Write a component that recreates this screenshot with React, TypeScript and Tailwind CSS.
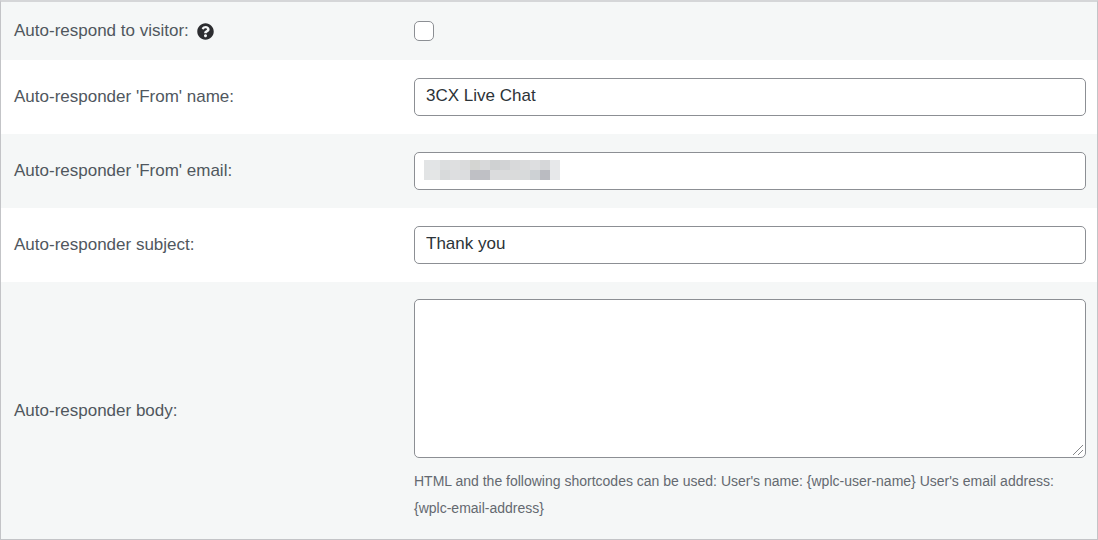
import type { ReactNode } from 'react';

const inputClass =
  'block h-[38px] w-full rounded-[5px] border border-[#8c8f94] bg-white px-[11px] pb-0.5 text-[17px] text-[#2c3338] outline-none focus:border-[#2271b1]';

// Blocks that hide the sender address, two rows of tiles
const maskTiles = [
  ['bg-[#e2e4e5]', 'bg-[#e2e4e6]', 'bg-[#dcdedf]', 'bg-[#dedfe0]', 'bg-[#dadbdc]', 'bg-[#d4d5d2]', 'bg-[#d8d9da]', 'bg-[#cfd1d2]', 'bg-[#d2d3d5]', 'bg-[#d8d9da]', 'bg-[#dadbdc]', 'bg-[#dddee0]', 'bg-[#d6d7d9]', 'bg-[#e7e8ea]'],
  ['bg-[#e2e4e5]', 'bg-[#e4e6e6]', 'bg-[#d8dadb]', 'bg-[#dddee0]', 'bg-[#dcdddf]', 'bg-[#bfc0c5]', 'bg-[#bfc0c5]', 'bg-[#dbdcdd]', 'bg-[#dadbdc]', 'bg-[#dadbdb]', 'bg-[#d8dadb]', 'bg-[#cdd1d4]', 'bg-[#babbc1]', 'bg-[#e7e8ea]'],
];

function HelpIcon() {
  return (
    <svg viewBox="0 0 512 512" className="h-[17px] w-[17px] fill-[#2c2d30]" aria-hidden="true">
      <path d="M504 256c0 136.997-111.043 248-248 248S8 392.997 8 256C8 119.083 119.043 8 256 8s248 111.083 248 248zM262.655 90c-54.497 0-89.255 22.957-116.549 63.758-3.536 5.286-2.353 12.415 2.715 16.258l34.699 26.31c5.205 3.947 12.621 3.008 16.665-2.122 17.864-22.658 30.113-35.797 57.303-35.797 20.429 0 45.698 13.148 45.698 32.958 0 14.976-12.363 22.667-32.534 33.976C247.128 238.528 216 254.941 216 296v4c0 6.627 5.373 12 12 12h56c6.627 0 12-5.373 12-12v-1.333c0-28.462 83.186-29.647 83.186-106.667 0-58.002-60.165-102-116.531-102zM256 338c-25.365 0-46 20.635-46 46 0 25.364 20.635 46 46 46s46-20.636 46-46c0-25.364-20.635-46-46-46z" />
    </svg>
  );
}

interface RowProps {
  id: string;
  label: string;
  help?: boolean;
  className?: string;
  children: ReactNode;
}

function Row({ id, label, help, className = 'py-[18px]', children }: RowProps) {
  return (
    <div className={`flex items-center pr-[11px] pl-[13px] odd:bg-[#f5f7f7] ${className}`}>
      <div className="flex w-[400px] shrink-0 items-center gap-2 text-[17px] leading-6 text-[#50575e]">
        <label htmlFor={id}>{label}</label>
        {help && (
          <button type="button" aria-label="Help">
            <HelpIcon />
          </button>
        )}
      </div>
      <div className="min-w-0 flex-1">{children}</div>
    </div>
  );
}

export default function App() {
  return (
    <form className="border border-t-2 border-[#c3c4c7] border-t-[#d5d6d8] bg-white font-['Liberation_Sans',Arial,sans-serif]">
      <Row id="respond" label="Auto-respond to visitor:" help className="py-[17px]">
        <input
          id="respond"
          type="checkbox"
          className="block h-5 w-5 appearance-none rounded-[5px] border border-[#8c8f94] bg-white checked:bg-[#2271b1]"
        />
      </Row>

      <Row id="from-name" label="Auto-responder 'From' name:">
        <input id="from-name" type="text" defaultValue="3CX Live Chat" className={inputClass} />
      </Row>

      <Row id="from-email" label="Auto-responder 'From' email:">
        <div className="relative">
          <input id="from-email" type="email" className={inputClass} />
          <div className="pointer-events-none absolute top-2 left-2.5 w-[136px] overflow-hidden">
            {maskTiles.map((tiles, row) => (
              <div key={row} className="flex justify-end">
                {tiles.map((tile, i) => (
                  <span key={i} className={`h-2.5 w-2.5 shrink-0 ${tile}`} />
                ))}
              </div>
            ))}
          </div>
        </div>
      </Row>

      <Row id="subject" label="Auto-responder subject:">
        <input id="subject" type="text" defaultValue="Thank you" className={inputClass} />
      </Row>

      <Row id="body" label="Auto-responder body:" className="py-[17px]">
        <div className="relative">
          <textarea
            id="body"
            className="block h-[159px] w-full resize-y rounded-[5px] border border-[#8c8f94] bg-white px-[11px] py-2 text-[17px] text-[#2c3338] outline-none focus:border-[#2271b1] [&::-webkit-resizer]:bg-transparent"
          />
          <svg
            viewBox="0 0 12 12"
            className="pointer-events-none absolute right-0.5 bottom-0.5 h-3 w-3 fill-none stroke-[#85878a]"
            aria-hidden="true"
          >
            <path d="M1 11 11 1M6 11l5-5" />
          </svg>
        </div>
        <p className="mt-2.5 text-[14px] leading-[27px] text-[#646970]">
          HTML and the following shortcodes can be used: User's name: {'{wplc-user-name}'} User's email address:{' '}
          {'{wplc-email-address}'}
        </p>
      </Row>
    </form>
  );
}
